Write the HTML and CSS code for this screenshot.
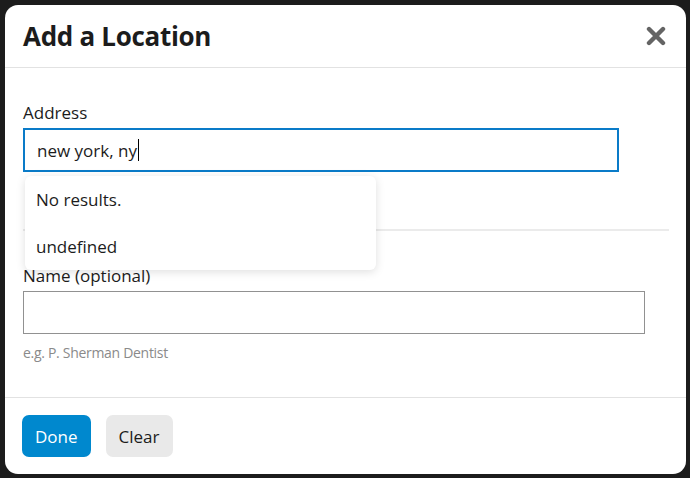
FILE: index.html
```html
<!DOCTYPE html>
<html lang="en">
<head>
  <meta charset="utf-8">
  <title>Add a Location</title>
  <link rel="stylesheet" href="styles.css">
</head>
<body>
  <div class="modal">

    <div class="modal-header">
      <h2>Add a Location</h2>
      <button class="close" aria-label="Close">
        <svg width="20" height="20" viewBox="0 0 20 20">
          <path d="M3 3 L17 17 M17 3 L3 17" stroke="#646464" stroke-width="4.4" stroke-linecap="round"/>
        </svg>
      </button>
    </div>

    <div class="modal-body">
      <div class="field address">
        <label for="address">Address</label>
        <div class="active">new york, ny<span class="caret"></span></div>
        <ul class="results">
          <li>No results.</li>
          <li>undefined</li>
        </ul>
      </div>

      <hr>

      <div class="field">
        <label for="name">Name (optional)</label>
        <input id="name" class="wide" type="text">
        <p class="hint">e.g. P. Sherman Dentist</p>
      </div>
    </div>

    <div class="modal-footer">
      <button class="btn primary">Done</button>
      <button class="btn">Clear</button>
    </div>

  </div>
</body>
</html>
```

FILE: styles.css
```css
:root {
  --text: #1c1c1c;
  --muted: #8a8a8a;
  --line: #e2e2e2;
  --blue: #0a7bc8;
  --button: #0088ce;
  --font: "Open Sans";
}

body {
  margin: 0;
  padding: 5px 4px 4px 5px;
  background-color: #1c1c1c;
  color: var(--text);
  font: 400 17px var(--font), sans-serif;
}

.modal {
  height: 469px;
  background-color: #fff;
  border-radius: 13px;
  display: flex;
  flex-direction: column;
  overflow: hidden;
}

.modal-header {
  display: flex;
  align-items: center;
  justify-content: space-between;
  height: 63px;
  padding: 0 20px 0 18px;
  border-bottom: 1px solid var(--line);
  box-sizing: border-box;
}

h2 {
  margin: 0;
  font-size: 26px;
  font-weight: 700;
  letter-spacing: -0.3px;
}

.close {
  border: 0;
  padding: 0;
  background: none;
  display: flex;
}

.modal-body {
  flex: 1;
  padding: 33px 17px 0 18px;
}

.field label {
  display: block;
  line-height: 24px;
  margin-bottom: 3px;
}

.address {
  position: relative;
}

.active,
input {
  box-sizing: border-box;
  display: block;
  font: 400 17px var(--font), sans-serif;
  color: var(--text);
  outline: 0;
}

.active {
  display: flex;
  align-items: center;
  width: 596px;
  height: 44px;
  padding: 0 12px;
  border: 2px solid var(--blue);
}

.caret {
  width: 1px;
  height: 22px;
  margin-left: 1px;
  background-color: #000;
}

input.wide {
  width: 622px;
  height: 43px;
  border: 1px solid #919191;
}

.results {
  position: absolute;
  top: 75px;
  left: 2px;
  width: 351px;
  margin: 0;
  padding: 0;
  list-style: none;
  background-color: #fff;
  border-radius: 6px;
  box-shadow: 0 2px 10px rgba(0, 0, 0, 0.13);
}

.results li {
  height: 47px;
  line-height: 47px;
  padding-left: 11px;
}

hr {
  margin: 57px 0 33px;
  border: 0;
  border-top: 2px solid #ebebeb;
}

.hint {
  margin: 9px 0 0;
  color: var(--muted);
  font-size: 14px;
  letter-spacing: -0.3px;
}

.modal-footer {
  display: flex;
  gap: 15px;
  height: 77px;
  padding: 17px 0 0 17px;
  border-top: 1px solid var(--line);
  box-sizing: border-box;
}

.btn {
  height: 42px;
  padding: 0 13px;
  border: 0;
  border-radius: 7px;
  background-color: #e9e9e9;
  color: var(--text);
  font: 400 17px var(--font), sans-serif;
}

.btn.primary {
  background-color: var(--button);
  color: #fff;
}
```
